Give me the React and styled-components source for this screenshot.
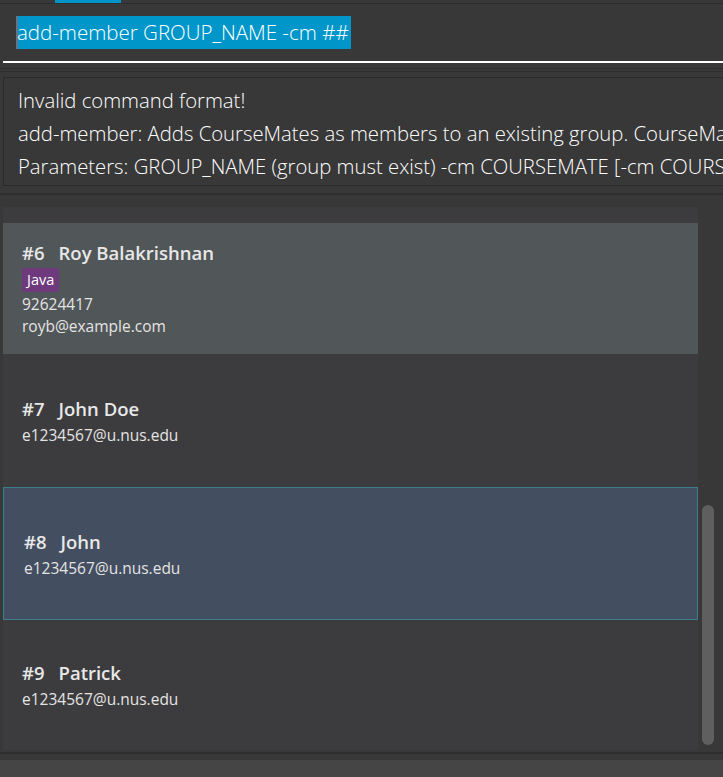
import React from 'react';
import styled, { createGlobalStyle } from 'styled-components';

const GlobalStyle = createGlobalStyle`
  html, body {
    margin: 0;
    padding: 0;
    background: #383838;
  }
  body {
    font-family: 'Open Sans', 'Noto Sans', sans-serif;
    overflow: hidden;
  }
`;

const Page = styled.div`
  width: 723px;
  height: 777px;
  background: #383838;
  display: flex;
  flex-direction: column;
  overflow: hidden;
`;

const TabStrip = styled.div`
  height: 3px;
  border-bottom: 1px solid #2c2c2c;
  display: flex;
`;

const Tab = styled.div`
  margin-left: 55px;
  width: 66px;
  background: #0095c8;
`;

const CommandBox = styled.div`
  height: 57px;
  display: flex;
  align-items: center;
  padding-left: 16px;
`;

const Caret = styled.span`
  width: 1px;
  height: 33px;
  background: #c0504d;
`;

const Selected = styled.span`
  background: #0096c9;
  color: #fff;
  font-size: 20.5px;
  font-weight: 300;
  line-height: 33px;
  padding-right: 2px;
  white-space: nowrap;
`;

const Underline = styled.div`
  margin-left: 3px;
  height: 2px;
  background: #fff;
`;

const Divider = styled.div`
  height: 14px;
  display: flex;
  flex-direction: column;
  justify-content: center;
  gap: 2px;
  &::before,
  &::after {
    content: '';
    height: 1px;
    background: #2e2e2e;
  }
`;

const ResultBox = styled.div`
  margin-left: 3px;
  height: 109px;
  box-sizing: border-box;
  border: 1px solid #2a2a2a;
  border-right: none;
  padding: 6px 0 0 14px;
  color: #fff;
  font-size: 20.3px;
  font-weight: 300;
  line-height: 33px;
  white-space: nowrap;
  overflow: hidden;
`;

const Gap = styled.div`
  height: 21px;
  display: flex;
  align-items: center;
  &::before {
    content: '';
    flex: 1;
    height: 2px;
    margin-bottom: 6px;
    background: #2f2f2f;
  }
`;

const ListRow = styled.div`
  display: flex;
  height: 543px;
`;

const ListPanel = styled.div`
  margin-left: 3px;
  width: 695px;
  background: #3c3c3e;
  padding-top: 16px;
  box-sizing: border-box;
  display: flex;
  flex-direction: column;
  overflow: hidden;
`;

const ScrollTrack = styled.div`
  flex: 1;
  padding: 298px 0 0 4px;
  box-sizing: border-box;
`;

const Thumb = styled.div`
  width: 12px;
  height: 240px;
  border-radius: 6px;
  background: #5f5f5f;
`;

const Card = styled.div`
  height: ${(p) => p.$h}px;
  flex-shrink: 0;
  box-sizing: border-box;
  display: flex;
  flex-direction: column;
  justify-content: center;
  background: ${(p) => (p.$selected ? '#434e60' : p.$hover ? '#515658' : '#3c3c3e')};
  border: ${(p) => (p.$selected ? '1px solid #3d7c8c' : 'none')};
  padding-left: ${(p) => (p.$selected ? '20px' : '19px')};
`;

const NameRow = styled.div`
  display: flex;
  gap: 14px;
  color: #e8e8e8;
  font-weight: 600;
  font-size: 18.5px;
  line-height: 26px;
  margin-bottom: 2px;
`;

const Tags = styled.div`
  display: flex;
  margin-bottom: 1px;
`;

const Tag = styled.span`
  background: #6f3a7d;
  color: #fff;
  font-size: 14.5px;
  line-height: 24px;
  padding: 0 5px;
  border-radius: 2px;
`;

const Detail = styled.div`
  color: #e4e4e4;
  font-size: 15.5px;
  line-height: 22px;
`;

const BottomBar = styled.div`
  flex: 1;
  display: flex;
  flex-direction: column;
  &::before {
    content: '';
    height: 2px;
    margin-top: 2px;
    background: #2f2f2f;
  }
  &::after {
    content: '';
    flex: 1;
    margin-top: 6px;
    background: #454545;
  }
`;

const people = [
  { id: 6, name: 'Roy Balakrishnan', tags: ['Java'], phone: '92624417', email: 'royb@example.com', h: 131, hover: true },
  { id: 7, name: 'John Doe', email: 'e1234567@u.nus.edu', h: 133 },
  { id: 8, name: 'John', email: 'e1234567@u.nus.edu', h: 133, selected: true },
  { id: 9, name: 'Patrick', email: 'e1234567@u.nus.edu', h: 130 },
];

export default function App() {
  return (
    <Page>
      <GlobalStyle />
      <TabStrip>
        <Tab />
      </TabStrip>
      <CommandBox>
        <Caret />
        <Selected>add-member GROUP_NAME -cm ##</Selected>
      </CommandBox>
      <Underline />
      <Divider />
      <ResultBox>
        <div>Invalid command format!</div>
        <div>add-member: Adds CourseMates as members to an existing group. CourseMates must exist.</div>
        <div>Parameters: GROUP_NAME (group must exist) -cm COURSEMATE [-cm COURSEMATE]...</div>
      </ResultBox>
      <Gap />
      <ListRow>
        <ListPanel>
          {people.map((p) => (
            <Card key={p.id} $h={p.h} $hover={p.hover} $selected={p.selected}>
              <NameRow>
                <span>#{p.id}</span>
                <span>{p.name}</span>
              </NameRow>
              {p.tags && (
                <Tags>
                  {p.tags.map((t) => (
                    <Tag key={t}>{t}</Tag>
                  ))}
                </Tags>
              )}
              {p.phone && <Detail>{p.phone}</Detail>}
              <Detail>{p.email}</Detail>
            </Card>
          ))}
        </ListPanel>
        <ScrollTrack>
          <Thumb />
        </ScrollTrack>
      </ListRow>
      <BottomBar />
    </Page>
  );
}
